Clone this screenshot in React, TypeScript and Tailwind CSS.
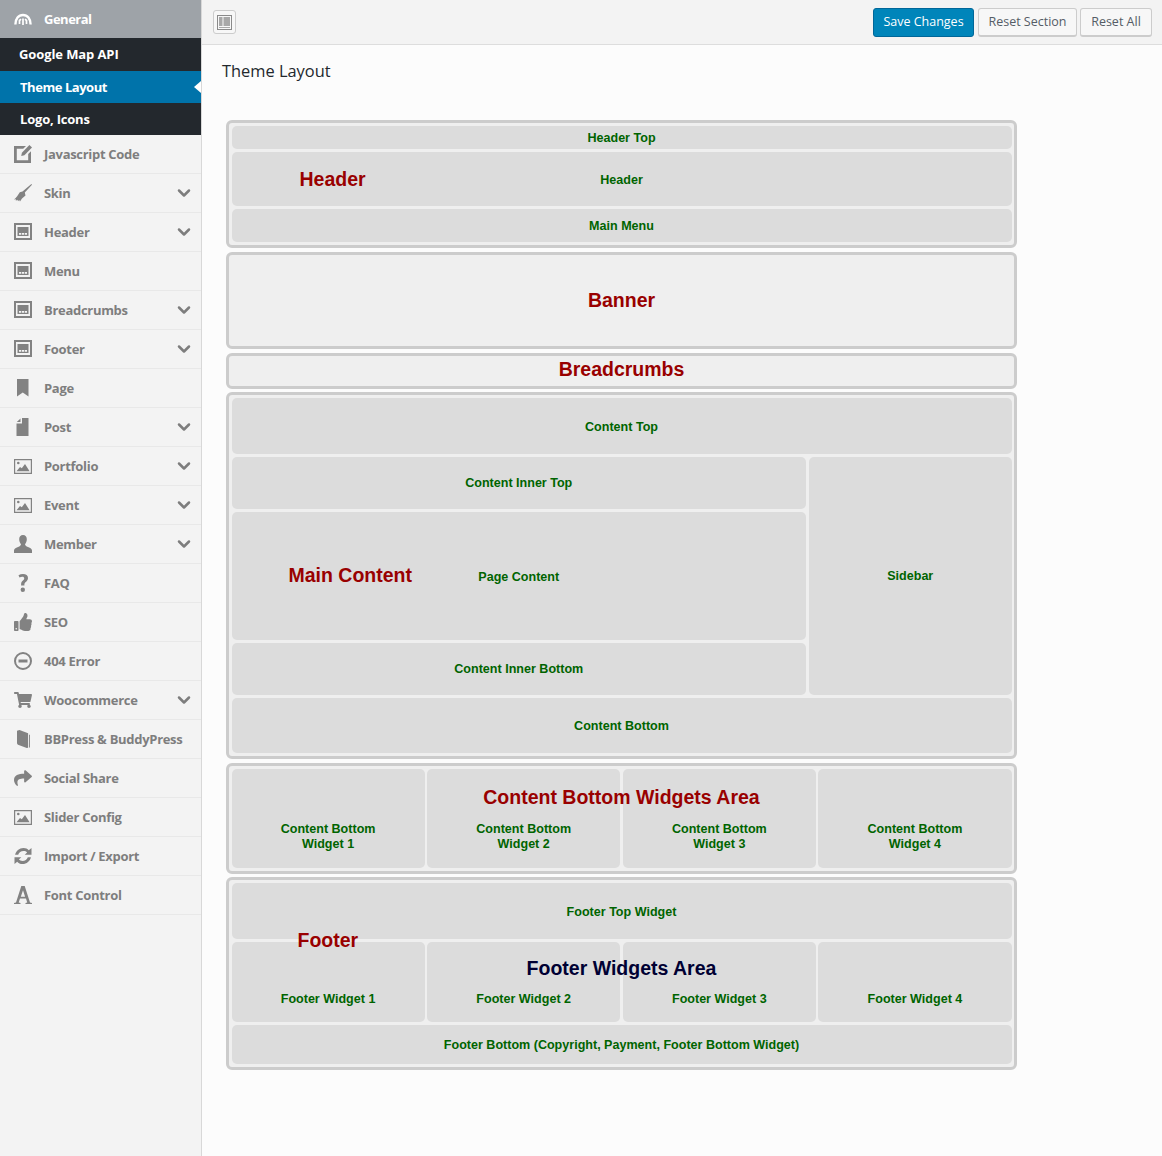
import React from "react";
import { ChevronDown } from "lucide-react";
import { FaThumbsUp, FaShoppingCart, FaShare } from "react-icons/fa";

const ICON_CLASS = "w-[18px] h-[18px] fill-[#828282]";

const EditIcon = () => (
  <svg viewBox="0 0 18 18" className={ICON_CLASS}>
    <path d="M0 1h12l-2.800 2.800H2.800v11.400h11.400V9L17 6.200V18H0z" />
    <path d="M15.400 0 18 2.400l-7.600 7.800-3.200.8.7-3.300z" />
  </svg>
);

const BrushIcon = () => (
  <svg viewBox="0 0 18 18" className={ICON_CLASS}>
    <path d="M17.400 0 18 .7 10.800 8.500 11.500 11.500 8 14.500 6 17.500 5.200 16 4 17.300 3.500 15.800 1.800 16.800 2 15.300 0 15.500C2.500 13.800 4 11 5.800 8.300L8.500 7.500z" />
  </svg>
);

const WebsiteIcon = () => (
  <svg viewBox="0 0 18 18" className={ICON_CLASS}>
    <path fillRule="evenodd" d="M0 0h18v17H0zM2 2v13h14V2z" />
    <path fillRule="evenodd" d="M3.500 4h11v9h-11zM5 10v1.700h2.200V10zM7.900 10v1.700h2.200V10zM10.800 10v1.700H13V10z" />
  </svg>
);

const BookmarkIcon = () => (
  <svg viewBox="0 0 18 18" className={ICON_CLASS}>
    <path d="M3 0h11.500v17.500L8.750 13.500 3 17.500z" />
  </svg>
);

const FileIcon = () => (
  <svg viewBox="0 0 18 18" className={ICON_CLASS}>
    <path d="M8 0h6.500v18h-12V5.600h5.500zM6.500 .4v3.700H2.800z" />
  </svg>
);

const PictureIcon = () => (
  <svg viewBox="0 0 18 15" className="w-[18px] h-[15px] fill-[#828282]">
    <path fillRule="evenodd" d="M0 0h18v15H0zM1.200 1.200v12.600h15.600V1.200z" />
    <circle cx="4.300" cy="4" r="1.300" />
    <path d="M2.500 12.300 6 8l1.800 1.300L11 5l4.600 7.300z" />
  </svg>
);

const TorsoIcon = () => (
  <svg viewBox="0 0 18 18" className={ICON_CLASS}>
    <path d="M9 0c2.500 0 3.800 1.800 3.800 4.200 0 2-.8 3.800-1.800 5 .2 1.300 1 2 3 2.800 2.500 1 4 1.800 4 3.500V18H0v-2.500c0-1.700 1.500-2.500 4-3.500 2-.8 2.800-1.500 3-2.800-1-1.200-1.800-3-1.800-5C5.200 1.800 6.500 0 9 0z" />
  </svg>
);

const QuestionIcon = () => (
  <svg viewBox="0 0 18 18" className={ICON_CLASS}>
    <path d="M4.500 1.200C5.800.4 7.400 0 9 0c3 0 5 1.500 5 4.100 0 1.900-1 3-2.200 4-1 .8-1.400 1.400-1.400 2.600v.7H7.100v-1c0-1.800.7-2.900 1.800-3.800.9-.8 1.300-1.400 1.300-2.300 0-1-.7-1.600-1.900-1.600-1 0-1.900.3-2.800.9z" />
    <circle cx="8.800" cy="15.800" r="2.200" />
  </svg>
);

const MinusIcon = () => (
  <svg viewBox="0 0 18 18" className={ICON_CLASS}>
    <path fillRule="evenodd" d="M9 0a9 9 0 1 1 0 18A9 9 0 0 1 9 0zm0 2a7 7 0 1 0 0 14A7 7 0 0 0 9 2z" />
    <path d="M4.500 7.500h9v3h-9z" />
  </svg>
);

const BookIcon = () => (
  <svg viewBox="0 0 18 18" className={ICON_CLASS}>
    <path d="M3 .8 5.500 0l8.600 3.300v14.500L12.800 18 4 14.800C3.300 14.400 3 13.800 3 13z" />
    <path d="M15 4.500l.9.4v12.400l-.9.4z" />
  </svg>
);

const RefreshIcon = () => (
  <svg viewBox="0 0 18 18" className={ICON_CLASS}>
    <path d="M9.500 1c2.200 0 4 .9 5.300 2.300L17.500 1v6.800h-6.800l2.400-2.400C12.200 4.500 11 4 9.500 4 7 4 4.900 5.600 4.200 7.800H1.100C1.900 4 5.300 1 9.500 1z" />
    <path d="M8.500 17c-2.200 0-4-.9-5.300-2.300L.5 17v-6.800h6.800l-2.400 2.400C5.800 13.500 7 14 8.500 14c2.500 0 4.600-1.600 5.300-3.800h3.100C16.100 14 12.700 17 8.500 17z" />
  </svg>
);

const FontIcon = () => (
  <svg viewBox="0 0 18 18" className={ICON_CLASS}>
    <path fillRule="evenodd" d="M7.300 0h3.400l5.300 16.500 2 .5v1h-6.500v-1l1.700-.5-1.200-4H6l-1.300 4 1.800.5v1H0v-1l2-.5zM9 4.200 6.800 10.700h4.300z" />
  </svg>
);

const GeneralIcon = () => (
  <svg viewBox="0 0 18 18" fill="none" stroke="white" className="w-[18px] h-[18px]">
    <path strokeWidth="2.400" d="M1.400 14.500C1.400 8.800 4.600 5 9 5s7.600 3.800 7.600 9.500" />
    <path strokeWidth="1.700" d="M9 8.500V15M5.500 14V10.500L7 9.200M12.500 14V10.500L11 9.200" />
  </svg>
);

const Chevron = () => (
  <ChevronDown size={20} strokeWidth={3} className="text-[#7d7d7d]" />
);

const menuItems: { label: string; icon: React.ReactNode; arrow?: boolean }[] = [
  { label: "Javascript Code", icon: <EditIcon /> },
  { label: "Skin", icon: <BrushIcon />, arrow: true },
  { label: "Header", icon: <WebsiteIcon />, arrow: true },
  { label: "Menu", icon: <WebsiteIcon /> },
  { label: "Breadcrumbs", icon: <WebsiteIcon />, arrow: true },
  { label: "Footer", icon: <WebsiteIcon />, arrow: true },
  { label: "Page", icon: <BookmarkIcon /> },
  { label: "Post", icon: <FileIcon />, arrow: true },
  { label: "Portfolio", icon: <PictureIcon />, arrow: true },
  { label: "Event", icon: <PictureIcon />, arrow: true },
  { label: "Member", icon: <TorsoIcon />, arrow: true },
  { label: "FAQ", icon: <QuestionIcon /> },
  { label: "SEO", icon: <FaThumbsUp className="w-[18px] h-[18px] text-[#828282]" /> },
  { label: "404 Error", icon: <MinusIcon /> },
  { label: "Woocommerce", icon: <FaShoppingCart className="w-[18px] h-[18px] text-[#828282]" />, arrow: true },
  { label: "BBPress & BuddyPress", icon: <BookIcon /> },
  { label: "Social Share", icon: <FaShare className="w-[18px] h-[18px] text-[#828282]" /> },
  { label: "Slider Config", icon: <PictureIcon /> },
  { label: "Import / Export", icon: <RefreshIcon /> },
  { label: "Font Control", icon: <FontIcon /> },
];

const Sidebar = () => (
  <aside className="w-[202px] shrink-0 bg-[#f3f3f3] border-r border-[#d8d8d8] text-[13px] font-bold">
    <div className="h-[38px] bg-[#9ea3a8] flex items-center pl-[14px] text-white">
      <span className="w-[30px]">
        <GeneralIcon />
      </span>
      <span className="pt-[2px] tracking-[-0.5px]">General</span>
    </div>
    <div className="bg-[#23282d] text-white">
      <div className="h-[33px] flex items-center pl-[19px] tracking-[-0.1px]">Google Map API</div>
      <div className="h-[32px] flex items-center pl-[20px] pt-[2px] bg-[#0073aa] relative tracking-[-0.45px]">
        Theme Layout
        <span className="absolute right-0 top-[10px] border-y-[6px] border-y-transparent border-r-[7px] border-r-white" />
      </div>
      <div className="h-[32px] flex items-center pl-[20px] pt-[2px] tracking-[-0.2px]">Logo, Icons</div>
    </div>
    {menuItems.map((item) => (
      <div
        key={item.label}
        className="h-[39px] flex items-center pl-[14px] pr-[7px] border-b border-[#e8e8e8] text-[#7e7e7e]"
      >
        <span className="w-[30px] shrink-0 flex">{item.icon}</span>
        <span className="flex-1 whitespace-nowrap pt-[2px] tracking-[-0.3px]">{item.label}</span>
        {item.arrow && <Chevron />}
      </div>
    ))}
  </aside>
);

const Block = ({
  className = "",
  children,
}: {
  className?: string;
  children?: React.ReactNode;
}) => (
  <div
    className={`bg-[#dcdcdc] rounded-[5px] flex items-center justify-center text-center text-[#006400] relative ${className}`}
  >
    {children}
  </div>
);

const Area = ({
  className = "",
  children,
}: {
  className?: string;
  children?: React.ReactNode;
}) => (
  <div
    className={`border-[3px] border-[#cccccc] rounded-[6px] bg-[#efefef] px-[2.5px] py-[3px] relative ${className}`}
  >
    {children}
  </div>
);

const RedLabel = ({ className, children }: { className: string; children: React.ReactNode }) => (
  <span className={`absolute text-[19.5px] leading-none text-[#990000] whitespace-nowrap z-10 ${className}`}>
    {children}
  </span>
);

const Widget = ({ children }: { children: React.ReactNode }) => (
  <Block className="h-full items-end">{children}</Block>
);

const LayoutMap = () => (
  <div className="w-[791px] ml-[24px] mt-[38px] flex flex-col font-['Liberation_Sans',Arial,sans-serif] font-bold text-[12.55px] leading-[15px]">
    <Area className="h-[128px] flex flex-col gap-[3px]">
      <Block className="h-[23px] pt-[2px]">Header Top</Block>
      <Block className="h-[55px] pt-[2px]">
        <RedLabel className="left-[68px] top-[18px]">Header</RedLabel>
        Header
      </Block>
      <Block className="h-[33px] pt-[1px]">Main Menu</Block>
    </Area>

    <Area className="h-[97px] mt-[4px] flex items-center justify-center">
      <span className="text-[19.5px] text-[#990000]">Banner</span>
    </Area>

    <Area className="h-[36px] mt-[4px] flex items-center justify-center">
      <span className="text-[19.5px] text-[#990000] pb-[3px]">Breadcrumbs</span>
    </Area>

    <Area className="h-[367px] mt-[3px] flex flex-col gap-[3px]">
      <Block className="h-[56px] pt-[2px]">Content Top</Block>
      <div className="h-[238px] flex gap-[3px]">
        <div className="w-[574.500px] flex flex-col gap-[3px]">
          <Block className="h-[52px]">Content Inner Top</Block>
          <Block className="h-[128px] pt-[2px]">
            <RedLabel className="left-[57px] top-[54px]">Main Content</RedLabel>
            Page Content
          </Block>
          <Block className="h-[52px]">Content Inner Bottom</Block>
        </div>
        <Block className="flex-1">Sidebar</Block>
      </div>
      <Block className="h-[55px] pt-[2px]">Content Bottom</Block>
    </Area>

    <Area className="h-[111px] mt-[4px]">
      <div className="h-full grid grid-cols-4 gap-[2.500px] relative">
        <RedLabel className="left-1/2 -translate-x-1/2 top-[19px]">Content Bottom Widgets Area</RedLabel>
        <Widget>
          <span className="pb-[16px]">Content Bottom<br />Widget 1</span>
        </Widget>
        <Widget>
          <span className="pb-[16px]">Content Bottom<br />Widget 2</span>
        </Widget>
        <Widget>
          <span className="pb-[16px]">Content Bottom<br />Widget 3</span>
        </Widget>
        <Widget>
          <span className="pb-[16px]">Content Bottom<br />Widget 4</span>
        </Widget>
      </div>
    </Area>

    <Area className="h-[193px] mt-[3px] flex flex-col gap-[3px]">
      <Block className="h-[56px] pt-[2px]">Footer Top Widget</Block>
      <div className="h-[80px] grid grid-cols-4 gap-[2.500px] relative">
        <RedLabel className="left-[66px] top-[-11px]">Footer</RedLabel>
        <span className="absolute left-1/2 -translate-x-1/2 top-[17px] text-[19.5px] leading-none text-[#000033] whitespace-nowrap z-10">
          Footer Widgets Area
        </span>
        <Widget>
          <span className="pb-[15px]">Footer Widget 1</span>
        </Widget>
        <Widget>
          <span className="pb-[15px]">Footer Widget 2</span>
        </Widget>
        <Widget>
          <span className="pb-[15px]">Footer Widget 3</span>
        </Widget>
        <Widget>
          <span className="pb-[15px]">Footer Widget 4</span>
        </Widget>
      </div>
      <Block className="h-[39px] pt-[2px]">Footer Bottom (Copyright, Payment, Footer Bottom Widget)</Block>
    </Area>
  </div>
);

const TopBar = () => (
  <div className="h-[45px] bg-[#f3f3f3] border-b border-[#dddddd] flex items-center justify-between pl-[11px] pr-[10px]">
    <button className="w-[23px] h-[24px] bg-[#f7f7f7] border border-[#cccccc] rounded-[3px] flex items-center justify-center">
      <svg viewBox="0 0 15 15" className="w-[15px] h-[15px]">
        <path fillRule="evenodd" fill="#8a8a8a" d="M0 0h15v15H0zM1 1v13h13V1z" />
        <path fill="#a8a8a8" d="M2 2h3.500v9H2zM6.500 2H13v9H6.500zM2 12h11v1H2z" />
      </svg>
    </button>
    <div className="flex items-center text-[12.5px]">
      <button className="w-[101px] h-[29px] rounded-[3px] bg-[#0085ba] border border-[#006799] text-white">
        Save Changes
      </button>
      <button className="w-[99px] h-[29px] ml-[4px] pt-[2px] rounded-[3px] bg-[#f7f7f7] border border-[#cccccc] border-b-2 text-[#555d66]">
        Reset Section
      </button>
      <button className="w-[72px] h-[29px] ml-[3px] pt-[2px] rounded-[3px] bg-[#f7f7f7] border border-[#cccccc] border-b-2 text-[#555d66]">
        Reset All
      </button>
    </div>
  </div>
);

export default function App() {
  return (
    <div className="w-[1162px] h-[1156px] flex overflow-hidden bg-[#fcfcfc] font-['Open_Sans',sans-serif]">
      <Sidebar />
      <main className="flex-1 min-w-0">
        <TopBar />
        <h2 className="pl-[20px] pt-[14px] text-[16.4px] leading-[23px] text-[#23282d]">Theme Layout</h2>
        <LayoutMap />
      </main>
    </div>
  );
}
